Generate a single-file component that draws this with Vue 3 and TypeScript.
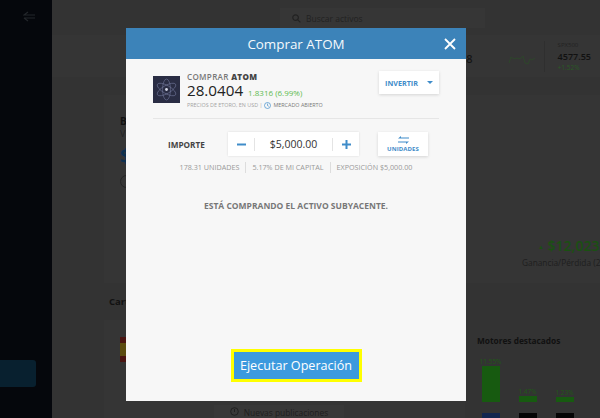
<script setup lang="ts">
const stats = ["178.31 UNIDADES", "5.17% DE MI CAPITAL", "EXPOSICIÓN $5,000.00"];
const movers = [
  { pct: "11.55%", height: 36, logo: "#12264f" },
  { pct: "1.47%", height: 6, logo: "#050505" },
  { pct: "1.23%", height: 5, logo: "#050505" },
];
</script>

<template>
  <div class="page">
    <aside class="sidebar">
      <svg class="back" width="13" height="11" viewBox="0 0 13 11" fill="none" stroke="#23262b" stroke-width="1.2">
        <path d="M5 1 1 4h11M1 7h11M1 7l4 3" />
      </svg>
      <div class="side-btn"></div>
    </aside>

    <main class="main">
      <div class="topbar">
        <div class="search">
          <svg width="9" height="9" viewBox="0 0 9 9" fill="none" stroke="#222" stroke-width="1.2">
            <circle cx="3.6" cy="3.6" r="2.8" /><path d="m5.8 5.8 2.6 2.6" />
          </svg>
          <span>Buscar activos</span>
        </div>
      </div>

      <div class="ticker">
        <span class="tick-val">78</span>
        <svg class="spark" width="28" height="14" viewBox="0 0 28 14" fill="none" stroke="#2c4a28" stroke-width=".8">
          <path d="M1 11 3 5l3 2 3-1 3 1 3-3 2 7 3 1 2-5 2 1 3-2" />
        </svg>
        <div class="tick-box">
          <span class="tick-name">SPX500</span>
          <span class="tick-price">4577.55</span>
          <span class="tick-pct">+1.52%</span>
        </div>
      </div>

      <div class="columns">
        <div class="left">
          <section class="card balance">
            <b class="bal-title">B</b>
            <span class="bal-sub">V</span>
            <b class="bal-num">$</b>
            <i class="bal-circle"></i>
            <div class="gain">
              <span class="gain-num"><small>▲</small> $12,023.5</span>
              <span class="gain-label">Ganancia/Pérdida (2</span>
            </div>
          </section>
          <h3 class="sec-title">Cartera</h3>
          <section class="card list">
            <i class="flag"></i>
            <div class="news">
              <svg width="9" height="9" viewBox="0 0 9 9" fill="none" stroke="#1e1e1e" stroke-width=".9">
                <circle cx="4.5" cy="4.5" r="3.8" /><path d="M4.5 2v3" />
              </svg>
              Nuevas publicaciones
            </div>
          </section>
        </div>
        <div class="right">
          <h3 class="sec-title movers-title">Motores destacados</h3>
          <div class="movers">
            <div v-for="m in movers" :key="m.pct" class="mover">
              <span class="mover-pct">{{ m.pct }}</span>
              <i class="mover-bar" :style="{ height: m.height + 'px' }"></i>
              <i class="mover-logo" :style="{ background: m.logo }"></i>
            </div>
          </div>
        </div>
      </div>
    </main>

    <div class="modal">
      <header class="modal-head">
        <span class="modal-title">Comprar ATOM</span>
        <svg class="close" width="12" height="12" viewBox="0 0 12 12" fill="none" stroke="#fff" stroke-width="1.8">
          <path d="m1 1 10 10M11 1 1 11" />
        </svg>
      </header>

      <div class="modal-body">
        <div class="asset">
          <svg class="logo" width="27" height="27" viewBox="0 0 27 27" fill="none">
            <rect width="27" height="27" fill="#2a2d44" />
            <g stroke="#6f7598" stroke-width=".6">
              <ellipse cx="13.5" cy="13.5" rx="4" ry="10.5" />
              <ellipse cx="13.5" cy="13.5" rx="4" ry="10.5" transform="rotate(60 13.5 13.5)" />
              <ellipse cx="13.5" cy="13.5" rx="4" ry="10.5" transform="rotate(120 13.5 13.5)" />
            </g>
            <circle cx="13.5" cy="13.5" r="1.4" fill="#d5d8e8" />
          </svg>
          <div class="asset-info">
            <div class="asset-name">COMPRAR <b>ATOM</b></div>
            <div class="asset-price">
              <span class="price">28.0404</span>
              <span class="change">1.8316 (6.99%)</span>
            </div>
            <div class="asset-note">
              PRECIOS DE ETORO, EN USD |
              <svg width="7" height="7" viewBox="0 0 7 7" fill="none" stroke="#3f8cc9" stroke-width=".7">
                <circle cx="3.5" cy="3.5" r="3" /><path d="M3.5 1.6v2l1.3.7" />
              </svg>
              <span class="open">MERCADO ABIERTO</span>
            </div>
          </div>
          <button class="invest">
            INVERTIR
            <i class="caret"></i>
          </button>
        </div>

        <div class="amount">
          <span class="amount-label">IMPORTE</span>
          <div class="stepper">
            <span class="step">
              <svg width="9" height="9" viewBox="0 0 9 9" stroke="#3f8cc9" stroke-width="2"><path d="M0 4.5h9" /></svg>
            </span>
            <span class="amount-value">$5,000.00</span>
            <span class="step">
              <svg width="9" height="9" viewBox="0 0 9 9" stroke="#3f8cc9" stroke-width="2"><path d="M0 4.5h9M4.5 0v9" /></svg>
            </span>
          </div>
          <button class="units">
            <svg width="11" height="8" viewBox="0 0 11 8" fill="#3f8cc9">
              <path d="M3 0 0 2.5h11v-1H3zM8 8l3-2.5H0v1h8z" />
            </svg>
            UNIDADES
          </button>
        </div>

        <div class="stats">
          <span v-for="s in stats" :key="s" class="stat">{{ s }}</span>
        </div>

        <p class="notice">ESTÁ COMPRANDO EL ACTIVO SUBYACENTE.</p>

        <button class="execute">Ejecutar Operación</button>
      </div>
    </div>
  </div>
</template>

<style>
html,
body {
  margin: 0;
  background: #333;
}
</style>

<style scoped>
.page {
  position: relative;
  display: flex;
  width: 600px;
  height: 418px;
  overflow: hidden;
  background: #333;
  font-family: "Open Sans", sans-serif;
}
.sidebar {
  flex: 0 0 52px;
  display: flex;
  flex-direction: column;
  justify-content: space-between;
  align-items: flex-end;
  padding: 11px 0 31px;
  box-sizing: border-box;
  background: #05070c;
}
.back {
  margin-right: 16px;
}
.side-btn {
  width: 36px;
  height: 27px;
  border-radius: 0 3px 3px 0;
  background: #08202f;
  margin-right: 16px;
}
.main {
  flex: 1;
  display: flex;
  flex-direction: column;
  min-width: 0;
}
.topbar {
  flex: 0 0 35px;
  display: flex;
  padding: 8px 115px 7px 228px;
  box-sizing: border-box;
}
.search {
  flex: 1;
  display: flex;
  align-items: center;
  gap: 5px;
  padding-left: 12px;
  background: #363636;
  font-size: 8.5px;
  color: #222;
}
.ticker {
  flex: 0 0 42px;
  display: flex;
  align-items: center;
  background: #353535;
  padding-left: 408px;
}
.tick-val {
  font-size: 11px;
  font-weight: 600;
  color: #151515;
  margin-top: 4px;
}
.spark {
  margin: 5px 8px 0 35px;
}
.tick-box {
  display: flex;
  flex-direction: column;
  padding-left: 13px;
  border-left: 1px solid #2f2f2f;
}
.tick-name {
  font-size: 6px;
  line-height: 9px;
  color: #222;
}
.tick-price {
  font-size: 9px;
  font-weight: 600;
  line-height: 13px;
  color: #111;
}
.tick-pct {
  font-size: 6.5px;
  line-height: 9px;
  color: #2a5a25;
}
.columns {
  flex: 1;
  min-height: 0;
  display: flex;
  padding: 18px 0 0 52px;
  gap: 12px;
}
.left {
  flex: 0 0 361px;
  min-width: 0;
}
.card {
  position: relative;
  background: #353535;
}
.balance {
  width: 496px;
  height: 188px;
  padding: 19px 0 0 16px;
  box-sizing: border-box;
  display: flex;
  flex-direction: column;
  align-items: flex-start;
}
.bal-title {
  font-size: 10px;
  color: #111;
  line-height: 14px;
}
.bal-sub {
  font-size: 9px;
  color: #222;
  line-height: 11px;
}
.bal-num {
  font-size: 20px;
  color: #0d3050;
  line-height: 24px;
  margin-top: 5px;
}
.bal-circle {
  width: 11px;
  height: 11px;
  border: 1px solid #242424;
  border-radius: 50%;
  margin-top: 7px;
}
.gain {
  position: absolute;
  left: 418px;
  top: 142px;
  display: flex;
  flex-direction: column;
  white-space: nowrap;
}
.gain-num {
  font-size: 14px;
  font-weight: 600;
  line-height: 17px;
  color: #1a5012;
  padding-left: 16px;
}
.gain-num small {
  font-size: 6px;
  vertical-align: 2px;
}
.gain-label {
  font-size: 8.3px;
  line-height: 13px;
  color: #1e1e1e;
}
.sec-title {
  margin: 12px 0 11px 5px;
  font-size: 9.5px;
  line-height: 14px;
  font-weight: 700;
  color: #111;
}
.list {
  height: 120px;
  padding: 17px 0 0 16px;
  box-sizing: border-box;
}
.flag {
  display: block;
  width: 8px;
  height: 25px;
  background: linear-gradient(#4a1512 25%, #5c4c10 25% 75%, #4a1512 75%);
}
.news {
  position: absolute;
  left: 110px;
  top: 85px;
  width: 130px;
  height: 20px;
  padding-top: 2px;
  box-sizing: border-box;
  display: flex;
  align-items: flex-start;
  justify-content: center;
  gap: 5px;
  background: #383838;
  font-size: 8.4px;
  line-height: 11px;
  color: #1e1e1e;
}
.right {
  position: relative;
  top: 239px;
  height: 95px;
}
.movers-title {
  margin: 0 0 4px;
  white-space: nowrap;
  font-size: 8.3px;
}
.movers {
  display: flex;
  align-items: flex-end;
  gap: 18px;
  height: 77px;
  padding-left: 4px;
}
.mover {
  display: flex;
  flex-direction: column;
  align-items: center;
  width: 19px;
}
.mover-pct {
  font-size: 6.5px;
  line-height: 9px;
  color: #1f5a16;
  white-space: nowrap;
}
.mover-bar {
  width: 18px;
  background: #175a10;
  margin-bottom: 11px;
}
.mover-logo {
  width: 18px;
  height: 16px;
}
.modal {
  position: absolute;
  left: 126px;
  top: 28px;
  width: 340px;
  height: 373px;
  display: flex;
  flex-direction: column;
  background: #f7f7f7;
}
.modal-head {
  position: relative;
  flex: 0 0 31px;
  display: flex;
  align-items: center;
  justify-content: center;
  background: #3c83b9;
}
.modal-title {
  font-size: 13.4px;
  color: #f4f9fc;
}
.close {
  position: absolute;
  right: 10px;
  top: 10px;
}
.modal-body {
  flex: 1;
  display: flex;
  flex-direction: column;
  padding: 12px 27px 19px;
}
.asset {
  display: flex;
  align-items: flex-start;
  border-bottom: 1px solid #e6e6e6;
  height: 48px;
  box-sizing: border-box;
}
.logo {
  flex: none;
  margin: 5px 7px 0 0;
}
.asset-info {
  flex: 1;
  display: flex;
  flex-direction: column;
}
.asset-name {
  font-size: 8.1px;
  line-height: 11px;
  font-weight: 600;
  letter-spacing: .3px;
  color: #777;
}
.asset-name b {
  color: #444;
}
.asset-price {
  display: flex;
  align-items: baseline;
  gap: 5px;
  line-height: 17px;
}
.price {
  font-size: 15.2px;
  color: #222;
}
.change {
  font-size: 8px;
  color: #5dbb4e;
}
.asset-note {
  display: flex;
  align-items: center;
  gap: 2px;
  font-size: 5.4px;
  line-height: 9px;
  color: #a3a3a3;
}
.open {
  color: #777;
}
button {
  border: none;
  padding: 0;
  font-family: inherit;
  cursor: pointer;
}
.invest {
  flex: none;
  width: 60px;
  height: 23px;
  display: flex;
  align-items: center;
  justify-content: space-between;
  padding: 0 6px;
  background: #fff;
  box-shadow: 0 1px 3px rgba(0, 0, 0, .14);
  color: #3f8cc9;
  font-size: 7.2px;
  font-weight: 700;
}
.caret {
  border: 3px solid transparent;
  border-top: 3px solid #3f8cc9;
  border-bottom: 0;
}
.amount {
  display: flex;
  align-items: center;
  margin-top: 13px;
  padding-left: 15px;
}
.amount-label {
  flex: 0 0 60px;
  font-size: 8.2px;
  font-weight: 700;
  color: #444;
}
.stepper {
  width: 131px;
  height: 24px;
  display: flex;
  align-items: center;
  background: #fff;
  box-shadow: 0 0 2px rgba(0, 0, 0, .12);
}
.step {
  flex: 0 0 26px;
  display: flex;
  justify-content: center;
  align-items: center;
}
.amount-value {
  flex: 1;
  height: 13px;
  line-height: 13px;
  text-align: center;
  font-size: 10.5px;
  color: #333;
  border-left: 1px solid #e4e4e4;
  border-right: 1px solid #e4e4e4;
}
.units {
  width: 50px;
  height: 24px;
  margin-left: 19px;
  display: flex;
  flex-direction: column;
  align-items: center;
  gap: 1px;
  padding-top: 4px;
  box-sizing: border-box;
  background: #fff;
  box-shadow: 0 1px 3px rgba(0, 0, 0, .14);
  color: #3f8cc9;
  font-size: 6px;
  font-weight: 700;
  letter-spacing: .1px;
}
.stats {
  display: flex;
  justify-content: center;
  margin-top: 6px;
  font-size: 7.2px;
  line-height: 11px;
  color: #999;
}
.stat {
  padding: 0 6px;
  border-left: 1px solid #ddd;
}
.stat:first-child {
  border-left: none;
}
.notice {
  margin: 27px 0 0;
  text-align: center;
  font-size: 8.5px;
  line-height: 11px;
  font-weight: 700;
  color: #777;
}
.execute {
  margin: auto auto 0;
  width: 131px;
  height: 33px;
  box-sizing: border-box;
  border: 3px solid #ffff00;
  background: #3c9ade;
  color: #fff;
  font-size: 12.6px;
  white-space: nowrap;
}
</style>
